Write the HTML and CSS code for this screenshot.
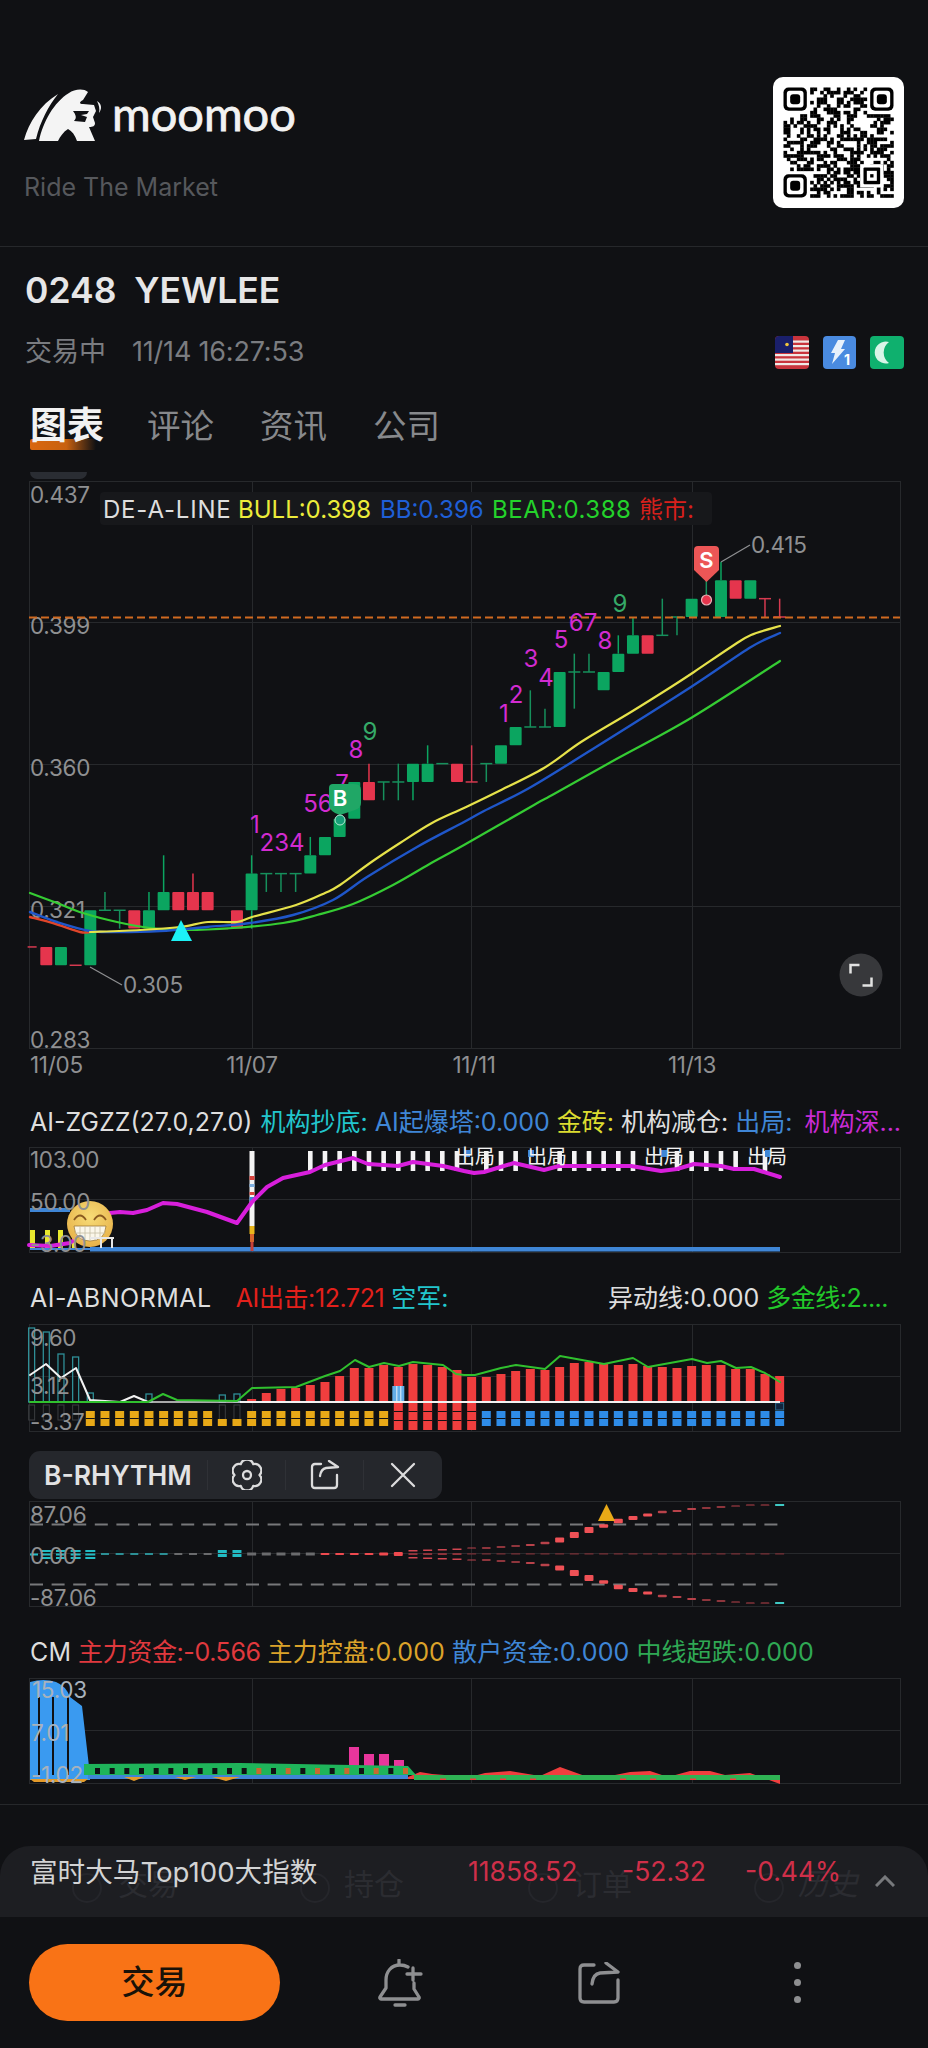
FILE: index.html
```html
<!DOCTYPE html>
<html lang="zh">
<head>
<meta charset="utf-8">
<title>0248 YEWLEE</title>
<link rel="stylesheet" href="styles.css">
</head>
<body>
<div class="page">
  <header class="brand">
    <div class="brand-left">
      <div class="logo">
        <svg class="bull" viewBox="0 0 78 53" width="78" height="53">
          <path class="bull-w" d="M0 51C5 33 16 16 34 5C25 16 16 33 12 50Z"/>
          <path class="bull-w" d="M15 52C19 33 30 13 45 4C50 0 60-1 64 3L59 11C55 13 55 15 59 15L70 16L72 22L69 28L71 34C71 37 69 38 65 38L71 52H53C51 46 48 42 44 40C39 43 36 48 34 52Z"/>
          <path class="bull-d" d="M49 22L65 22L63 25L57 26L63 28L61 33L50 32C53 29 52 26 49 22Z"/>
          <path class="bull-w" d="M73 12C78 15 78 20 75 24C76 20 75 16 73 12Z"/>
        </svg>
        <span class="wordmark">moomoo</span>
      </div>
      <div class="tagline">Ride The Market</div>
    </div>
    <div class="qr"><svg id="qr" viewBox="0 0 131 131" width="131" height="131"></svg></div>
  </header>

  <h1 class="stock-title">0248  YEWLEE</h1>

  <div class="status">
    <span class="status-state">交易中</span>
    <span class="status-time">11/14 16:27:53</span>
    <span class="status-icons">
      <svg viewBox="0 0 34 33" width="34" height="33">
        <rect class="f-red" width="34" height="33" rx="4"/>
        <rect class="f-white" y="4.500" width="34" height="2.200"/><rect class="f-white" y="9" width="34" height="2.200"/>
        <rect class="f-white" y="13.500" width="34" height="2.200"/><rect class="f-white" y="18" width="34" height="2.200"/>
        <rect class="f-white" y="22.500" width="34" height="2.200"/><rect class="f-white" y="27" width="34" height="2.200"/>
        <path class="f-navy" d="M4 0H18V17H0V4Q0 0 4 0Z"/>
        <path class="f-yellow" d="M9 3.500A5 5 0 1 0 9 13.500A4 4 0 1 1 9 3.500Z"/>
        <circle class="f-yellow" cx="12" cy="8.500" r="1.800"/>
      </svg>
      <svg viewBox="0 0 33 33" width="33" height="33">
        <rect class="b-blue" width="33" height="33" rx="4"/>
        <path class="i-white" d="M15 4H22L18 13H22L9 28L12 17H8Z"/>
        <text class="b-one" x="21" y="29">1</text>
      </svg>
      <svg viewBox="0 0 34 33" width="34" height="33">
        <rect class="b-green" width="34" height="33" rx="4"/>
        <path class="i-mint" d="M19 6A11 11 0 1 0 19 27A13 13 0 0 1 19 6Z"/>
      </svg>
    </span>
  </div>

  <nav class="tabs">
    <span class="tab tab-active">图表</span>
    <span class="tab">评论</span>
    <span class="tab">资讯</span>
    <span class="tab">公司</span>
  </nav>
  <div class="pill"></div>

  <svg class="chart main-chart" id="main" viewBox="29 481 872 600" width="872" height="600">
    <g id="main-grid"></g>
    <text class="axis" x="30" y="503">0.437</text>
    <text class="axis" x="30" y="634">0.399</text>
    <text class="axis" x="30" y="776">0.360</text>
    <text class="axis" x="30" y="918">0.321</text>
    <text class="axis" x="30" y="1048">0.283</text>
    <text class="axis" x="30" y="1073">11/05</text>
    <text class="axis axis-mid" x="252" y="1073">11/07</text>
    <text class="axis axis-mid" x="474" y="1073">11/11</text>
    <text class="axis axis-mid" x="692" y="1073">11/13</text>
    <g id="main-marks"></g>
    <rect class="legend-bg" x="100" y="492" width="612" height="33" rx="4"/>
    <text class="legend leg-name c-white" x="103" y="518">DE-A-LINE</text>
    <text class="legend c-yellow" x="238" y="518">BULL:0.398</text>
    <text class="legend c-navy" x="380" y="518">BB:0.396</text>
    <text class="legend leg-bear c-lime" x="492" y="518">BEAR:0.388</text>
    <text class="legend c-red" x="639" y="518">熊市:</text>
    <text class="td c-mag" x="255" y="833">1</text>
    <text class="td c-mag" x="282" y="851">234</text>
    <text class="td c-mag" x="318" y="812">56</text>
    <text class="td c-mag" x="342" y="792">7</text>
    <text class="td c-mag" x="356" y="758">8</text>
    <text class="td c-grn" x="370" y="740">9</text>
    <text class="td c-mag" x="504" y="722">1</text>
    <text class="td c-mag" x="516" y="703">2</text>
    <text class="td c-mag" x="531" y="667">3</text>
    <text class="td c-mag" x="546" y="686">4</text>
    <text class="td c-mag" x="561" y="648">5</text>
    <text class="td c-mag" x="583" y="631">67</text>
    <text class="td c-mag" x="605" y="649">8</text>
    <text class="td c-grn" x="620" y="612">9</text>
    <g id="main-signals"></g>
    <text class="sig-letter" x="340" y="806">B</text>
    <text class="sig-letter" x="706.500" y="568">S</text>
    <text class="axis" x="751" y="553">0.415</text>
    <text class="axis" x="123" y="993">0.305</text>
  </svg>

  <div class="ind-row row-one">
    <span class="c-white">AI-ZGZZ(27.0,27.0)</span>
    <span class="c-cyan gap-1">机构抄底:</span>
    <span class="c-blue">AI起爆塔:0.000</span>
    <span class="c-yellow2">金砖:</span>
    <span class="c-white">机构减仓:</span>
    <span class="c-blue">出局:</span>
    <span class="c-mag2 gap-s">机构深...</span>
  </div>
  <svg class="chart panel-one" id="p1" viewBox="29 1147 872 106" width="872" height="106">
    <g id="p1-marks"></g>
    <text class="axis" x="30" y="1168">103.00</text>
    <text class="axis" x="30" y="1210">50.00</text>
    <text class="axis" x="30" y="1252">-3.00</text>
    <text class="out" x="475" y="1164">出局</text>
    <text class="out" x="547" y="1164">出局</text>
    <text class="out" x="664" y="1164">出局</text>
    <text class="out" x="767" y="1164">出局</text>
  </svg>

  <div class="ind-row row-two">
    <span class="c-white wide">AI-ABNORMAL</span>
    <span class="c-red2 gap-l tight2">AI出击:12.721</span>
    <span class="c-cyan">空军:</span>
    <span class="c-white gap-auto">异动线:0.000</span>
    <span class="c-lime2 tight3">多金线:2....</span>
  </div>
  <svg class="chart panel-two" id="p2" viewBox="29 1324 872 108" width="872" height="108">
    <g id="p2-marks"></g>
    <text class="axis" x="30" y="1346">9.60</text>
    <text class="axis" x="30" y="1394">3.12</text>
    <text class="axis" x="30" y="1430">-3.37</text>
  </svg>

  <div class="toolbar">
    <span class="tool-name">B-RHYTHM</span>
    <span class="tool-btn">
      <svg viewBox="-15 -15 30 30" width="30" height="30">
        <path class="tool-i" d="M12.500 0A6.500 6.500 0 0 1 6.250 10.800A6.500 6.500 0 0 1 -6.250 10.800A6.500 6.500 0 0 1 -12.500 0A6.500 6.500 0 0 1 -6.250 -10.800A6.500 6.500 0 0 1 6.250 -10.800A6.500 6.500 0 0 1 12.500 0Z"/>
        <circle class="tool-i" r="4"/>
      </svg>
    </span>
    <span class="tool-btn">
      <svg viewBox="0 0 30 30" width="30" height="30">
        <path class="tool-i" d="M11 4H5Q2 4 2 7V25Q2 28 5 28H24Q27 28 27 25V15M19 1L28 7L16 8Q11 9 10 16"/>
      </svg>
    </span>
    <span class="tool-btn">
      <svg viewBox="0 0 30 30" width="30" height="30">
        <path class="tool-i" d="M4 4L26 26M26 4L4 26"/>
      </svg>
    </span>
  </div>
  <svg class="chart panel-three" id="p3" viewBox="29 1501 872 106" width="872" height="106">
    <g id="p3-marks"></g>
    <text class="axis" x="30" y="1523">87.06</text>
    <text class="axis" x="30" y="1564">0.00</text>
    <text class="axis" x="30" y="1606">-87.06</text>
  </svg>

  <div class="ind-row row-three">
    <span class="c-white">CM</span>
    <span class="c-red3 tight2">主力资金:-0.566</span>
    <span class="c-gold">主力控盘:0.000</span>
    <span class="c-blue">散户资金:0.000</span>
    <span class="c-green3">中线超跌:0.000</span>
  </div>
  <svg class="chart panel-four" id="p4" viewBox="29 1678 872 106" width="872" height="106">
    <g id="p4-marks"></g>
    <text class="axis axis-soft" x="32" y="1698">15.03</text>
    <text class="axis axis-soft" x="31" y="1741">7.01</text>
    <text class="axis axis-soft" x="31" y="1783">-1.02</text>
  </svg>
  <div class="rule"></div>

  <section class="sheet">
    <div class="ghost">
      <i class="ghost-ring ring-a"></i><span class="ghost-a">交易</span>
      <i class="ghost-ring ring-b"></i><span class="ghost-b">持仓</span>
      <i class="ghost-ring ring-c"></i><span class="ghost-c">订单</span>
      <i class="ghost-ring ring-d"></i><span class="ghost-d">历史</span>
    </div>
    <div class="sheet-name">富时大马Top100大指数</div>
    <div class="sheet-num num-a">11858.52</div>
    <div class="sheet-num num-b">-52.32</div>
    <div class="sheet-num num-c">-0.44%</div>
    <svg class="sheet-chev" viewBox="0 0 20 12" width="20" height="12"><path d="M1 11L10 2L19 11"/></svg>
  </section>

  <footer class="bar">
    <button class="trade">交易</button>
    <svg class="bar-i bell" viewBox="0 0 46 48" width="46" height="48">
      <path d="M31 8C28.500 6.600 26 6 23 6C14 6 9 13 9 21V29L3 38C2.500 39 3 40 4 40H41C42 40 42.500 39 42 38L37 30V24M22 1V6M18 46H28M36 9V21M30 15H44"/>
    </svg>
    <svg class="bar-i share" viewBox="0 0 42 42" width="42" height="42">
      <path d="M16 3H6Q2 3 2 7V36Q2 40 6 40H36Q40 40 40 36V18M28 1L40 10L22 11Q15 12 14 22"/>
    </svg>
    <span class="dots"><i></i><i></i><i></i></span>
  </footer>
</div>
<script src="app.js"></script>
</body>
</html>
```

FILE: styles.css
```css
* { box-sizing: border-box; }
html, body { margin: 0; padding: 0; background: #101114; }
body { font-family: Inter, "Noto Sans CJK SC", sans-serif; }
.page { width: 928px; height: 2048px; overflow: hidden; background: #101114; color: #e0e0e0; }

.brand { height: 247px; padding: 77px 24px 0; display: flex; justify-content: space-between; align-items: flex-start; border-bottom: 1px solid #26282b; }
.brand-left { padding-top: 12px; }
.logo { display: flex; align-items: center; height: 53px; }
.bull { display: block; }
.bull-w { fill: #f4f4f4; }
.bull-d { fill: #101114; }
.wordmark { margin-left: 10px; font: 400 47px/53px Lato, sans-serif; color: #f2f2f2; -webkit-text-stroke: 0.8px #f2f2f2; position: relative; top: -2px; }
.tagline { margin-top: 29px; font-size: 25px; line-height: 32px; color: #56585c; }
.qr { width: 131px; height: 131px; background: #fff; border-radius: 10px; }
.qr svg { display: block; }
.q-mod { fill: #000; }
.q-w { fill: #fff; }

.stock-title { margin: 13px 0 0 25px; height: 62px; font-size: 35.500px; line-height: 62px; font-weight: 600; color: #e6e6e7; white-space: pre; }

.status { margin: 10px 24px 0 25px; height: 40px; display: flex; align-items: center; color: #7a7c80; }
.status-state { font-size: 27px; line-height: 40px; }
.status-time { margin-left: 26px; font-size: 27px; line-height: 40px; letter-spacing: -0.2px; }
.status-icons { margin-left: auto; display: flex; gap: 14px; align-items: center; }
.status-icons svg { display: block; }
.f-red { fill: #c9343c; }
.f-white { fill: #f0e9e6; }
.f-navy { fill: #1a1f6b; }
.f-yellow { fill: #f2c63c; }
.b-blue { fill: #4a8be0; }
.b-green { fill: #0fb06e; }
.i-white { fill: #e8f1fb; }
.i-mint { fill: #d9f5e8; }
.b-one { font: 700 14px Inter, sans-serif; fill: #fff; }

.tabs { margin: 32px 0 0 30px; height: 44px; display: flex; align-items: center; gap: 47px; position: relative; }
.tab { font-size: 33.500px; line-height: 44px; color: #87898c; }
.tab-active { font-size: 37px; font-weight: 700; color: #f2f2f2; position: relative; z-index: 0; }
.tab-active::after { content: ""; position: absolute; left: 0; bottom: -2px; width: 66px; height: 11px; border-radius: 2px; background: linear-gradient(90deg, #d9670f 0%, #c8610f 55%, rgba(200,97,15,0) 100%); z-index: -1; }
.tab:nth-child(2) { margin-left: -4px; }
.tab:nth-child(3), .tab:nth-child(4) { margin-left: -1px; }
.pill { margin: 24px 0 0 30px; width: 57px; height: 7px; background: #2a2d33; border-radius: 0 0 9px 9px; }

.chart { display: block; margin-left: 29px; overflow: visible; }
.main-chart { margin-top: 2px; }
.panel-one { margin-top: 7px; }
.panel-two { margin-top: 8px; }
.panel-three { margin-top: 2px; }
.panel-four { margin-top: 8px; }

.axis { font: 400 22.500px Inter, sans-serif; fill: #8f9092; letter-spacing: -0.3px; }
.axis-mid { text-anchor: middle; }
.axis-soft { fill: #a8b2bd; }
.legend-bg { fill: #17181b; }
.legend { font: 400 24px Inter, "Noto Sans CJK SC", sans-serif; }
.leg-name { letter-spacing: 0.8px; }
.leg-bear { letter-spacing: 0.5px; }
.td { font: 400 24px Inter, sans-serif; text-anchor: middle; }
.sig-letter { font: 600 22px Inter, sans-serif; fill: #fff; text-anchor: middle; }
.out { font: 400 20px "Noto Sans CJK SC", sans-serif; fill: #f2f2f2; text-anchor: middle; }

.c-white { color: #dedede; fill: #dedede; }
.c-yellow { fill: #ecec3a; }
.c-navy { fill: #1f5fd6; }
.c-lime { fill: #24d22b; }
.c-red { fill: #d8201c; }
.c-mag { fill: #d22bd0; }
.c-grn { fill: #35aa68; }
.c-cyan { color: #22c6cd; }
.c-blue { color: #3f86d6; }
.c-yellow2 { color: #dcdc30; }
.c-mag2 { color: #c92bd4; }
.c-red2 { color: #e3201b; }
.c-lime2 { color: #22c82a; }
.c-red3 { color: #e0393e; }
.c-gold { color: #dca32a; }
.c-green3 { color: #2fa854; }

.ind-row { margin-left: 30px; width: 870px; height: 36px; display: flex; align-items: center; gap: 7px; font-size: 25px; line-height: 36px; white-space: nowrap; font-family: Inter, "Noto Sans CJK SC", sans-serif; }
.row-one { margin-top: 23px; }
.row-two { margin-top: 27px; width: 858px; }
.row-three { margin-top: 27px; letter-spacing: 0.12px; }
.gap-1 { margin-left: 1px; }
.gap-l { margin-left: 17px; }
.gap-s { margin-left: 5px; }
.gap-auto { margin-left: auto; }
.tight2 { letter-spacing: -0.4px; }
.tight3 { letter-spacing: -0.5px; }
.wide { letter-spacing: 0.5px; }

.toolbar { margin: 19px 0 0 29px; width: 413px; height: 48px; background: #25272c; border-radius: 11px; display: flex; align-items: center; }
.tool-name { margin-left: 15px; width: 163px; font-size: 26.500px; font-weight: 600; color: #e2e2e3; }
.tool-btn { width: 78px; display: flex; justify-content: center; border-left: 1px solid #2f3136; }
.tool-btn svg { display: block; }
.tool-i { fill: none; stroke: #dcdcdd; stroke-width: 2.300px; stroke-linejoin: round; stroke-linecap: round; }

.rule { margin-top: 20px; height: 1px; background: #26282b; }

.sheet { margin-top: 41px; height: 71px; background: #1d1e22; border-radius: 30px 30px 0 0; position: relative; }
.ghost { position: absolute; inset: 0; color: #2b2c31; font-size: 30px; }
.ghost span { position: absolute; top: 17px; line-height: 42px; }
.ghost-a { left: 118px; }
.ghost-b { left: 344px; }
.ghost-c { left: 572px; }
.ghost-d { left: 798px; font-style: italic; }
.ghost-ring { position: absolute; top: 27px; width: 30px; height: 30px; border: 2px solid #25262b; border-radius: 50%; }
.ring-a { left: 72px; }
.ring-b { left: 300px; }
.ring-c { left: 528px; }
.ring-d { left: 754px; }
.sheet-name { position: absolute; left: 30px; top: 6px; font-size: 27.600px; line-height: 40px; color: #d2d3d4; white-space: nowrap; }
.sheet-num { position: absolute; top: 5px; font-size: 26.500px; line-height: 40px; color: #cf2f49; }
.num-a { left: 468px; }
.num-b { left: 622px; }
.num-c { left: 745px; }
.sheet-chev { position: absolute; left: 875px; top: 29px; }
.sheet-chev path { fill: none; stroke: #77797c; stroke-width: 3px; }

.bar { height: 131px; position: relative; display: flex; align-items: center; }
.trade { margin-left: 29px; width: 251px; height: 77px; border: 0; border-radius: 39px; background: #f97316; color: #1a1208; font: 500 33px "Noto Sans CJK SC", sans-serif; padding: 0 0 5px; }
.bar-i { display: block; }
.bar-i path { fill: none; stroke: #8e8f91; stroke-width: 3.300px; stroke-linejoin: round; stroke-linecap: round; }
.bell { margin-left: 97px; }
.share { margin-left: 155px; }
.dots { margin-left: 174px; display: flex; flex-direction: column; gap: 10px; }
.dots i { display: block; width: 7px; height: 7px; border-radius: 50%; background: #8e8f91; }
```

FILE: app.js
```js
var NS = 'http://www.w3.org/2000/svg';
function el(parent, tag, attrs) {
  var n = document.createElementNS(NS, tag);
  for (var k in attrs) n.setAttribute(k, attrs[k]);
  parent.appendChild(n);
  return n;
}
function $(id) { return document.getElementById(id); }
function X(i) { return 46.3 + 14.667 * i; }
function rect(g, x, y, w, h, fill, extra) {
  var a = { x: x, y: y, width: w, height: h, fill: fill };
  if (extra) for (var k in extra) a[k] = extra[k];
  return el(g, 'rect', a);
}
function line(g, x1, y1, x2, y2, stroke, w, extra) {
  var a = { x1: x1, y1: y1, x2: x2, y2: y2, stroke: stroke, 'stroke-width': w };
  if (extra) for (var k in extra) a[k] = extra[k];
  return el(g, 'line', a);
}
function poly(g, pts, stroke, w) {
  return el(g, 'polyline', {
    points: pts.map(function (p) { return p.join(','); }).join(' '),
    fill: 'none', stroke: stroke, 'stroke-width': w,
    'stroke-linejoin': 'round', 'stroke-linecap': 'round'
  });
}
/* smooth curve through the points (Catmull-Rom) */
function curve(g, pts, stroke, w) {
  var d = 'M' + pts[0][0] + ' ' + pts[0][1];
  for (var i = 0; i < pts.length - 1; i++) {
    var p0 = pts[i - 1] || pts[i], p1 = pts[i], p2 = pts[i + 1], p3 = pts[i + 2] || p2;
    d += 'C' + (p1[0] + (p2[0] - p0[0]) / 6) + ' ' + (p1[1] + (p2[1] - p0[1]) / 6) + ' ' +
      (p2[0] - (p3[0] - p1[0]) / 6) + ' ' + (p2[1] - (p3[1] - p1[1]) / 6) + ' ' + p2[0] + ' ' + p2[1];
  }
  return el(g, 'path', { d: d, fill: 'none', stroke: stroke, 'stroke-width': w, 'stroke-linecap': 'round' });
}
var GRID = '#27292c';
function frame(g, top, bottom, mids) {
  el(g, 'rect', { x: 29.5, y: top + 0.5, width: 871, height: bottom - top, fill: 'none', stroke: GRID, 'stroke-width': 1 });
  [252.5, 471.5, 692.5].forEach(function (x) { line(g, x, top, x, bottom, GRID, 1); });
  mids.forEach(function (y) { line(g, 29, y + 0.5, 900, y + 0.5, GRID, 1); });
}

/* QR */
(function () {
  var g = $('qr'), n = 33, m = 110 / n, ox = 10.5, oy = 10.5, seed = 20241114;
  function rnd() { seed = (seed * 1664525 + 1013904223) % 4294967296; return seed / 4294967296; }
  function inFinder(c, r) {
    return (c < 8 && r < 8) || (c >= n - 8 && r < 8) || (c < 8 && r >= n - 8);
  }
  for (var r = 0; r < n; r++) {
    for (var c = 0; c < n; c++) {
      if (inFinder(c, r)) continue;
      var v = rnd();
      if (v > 0.5) el(g, 'rect', { x: ox + c * m, y: oy + r * m, width: m + 0.3, height: m + 0.3, 'class': 'q-mod' });
    }
  }
  [[0, 0], [n - 7, 0], [0, n - 7]].forEach(function (p) {
    var x = ox + p[0] * m, y = oy + p[1] * m, s = 7 * m;
    el(g, 'rect', { x: x, y: y, width: s, height: s, rx: 5, 'class': 'q-mod' });
    el(g, 'rect', { x: x + m, y: y + m, width: s - 2 * m, height: s - 2 * m, rx: 3, 'class': 'q-w' });
    el(g, 'rect', { x: x + 2 * m, y: y + 2 * m, width: 3 * m, height: 3 * m, rx: 3, 'class': 'q-mod' });
  });
  var ax = ox + (n - 9) * m, ay = oy + (n - 9) * m;
  el(g, 'rect', { x: ax - m, y: ay - m, width: 7 * m, height: 7 * m, 'class': 'q-w' });
  el(g, 'rect', { x: ax, y: ay, width: 5 * m, height: 5 * m, rx: 1, 'class': 'q-mod' });
  el(g, 'rect', { x: ax + m, y: ay + m, width: 3 * m, height: 3 * m, 'class': 'q-w' });
  el(g, 'rect', { x: ax + 2 * m, y: ay + 2 * m, width: m, height: m, 'class': 'q-mod' });
})();

/* Main chart */
(function () {
  var grid = $('main-grid'), g = $('main-marks'), s = $('main-signals');
  frame(grid, 481, 1048, [622, 764, 906]);
  function L(n) { return 617 + 18.33 * n; }
  var G = '#0ba560', R = '#e5354d', GL = '#16905c', RL = '#d63a50';
  /* i, colour, bodyTop, bodyBottom, wickTop, wickBottom */
  var C = [
    [-1,'r',18,18],[0,'r',18,19],[1,'g',18,19],[2,'r',19,19],[3,'g',16,19],
    [4,'g',16,16,15],[5,'g',16,16,null,17],[6,'r',16,17],[7,'g',16,17,15],
    [8,'g',15,16,13],[9,'r',15,16],[10,'r',15,16,14],[11,'r',15,16],[12,'r',17,17],
    [13,'r',16,17],[14,'g',14,16,13,17],[15,'g',14,14,null,15],[16,'g',14,14,null,15],
    [17,'g',14,14,null,15],[18,'g',13,14,12],[19,'g',12,13],[20,'g',11,12],
    [21,'g',9,11],[22,'r',9,10,8],[23,'g',9,9,null,10],[24,'g',9,9,8,10],
    [25,'g',8,9,null,10],[26,'g',8,9,7],[27,'g',8,8],[28,'r',8,9],
    [29,'r',9,9,7],[30,'g',8,8,null,9],[31,'g',7,8],[32,'g',6,7],[33,'g',6,6,4],
    [34,'g',6,6,5],[35,'g',3,6],[36,'g',3,3,2,5],[37,'g',3,3,2],[38,'g',3,4],
    [39,'g',2,3,1],[40,'g',1,2,0],[41,'r',1,2],[42,'g',1,1,-1],[43,'g',0,0,null,1],
    [44,'g',-1,0],[45,'g',-1,-1,-2,-1],[46,'g',-2,0,-3],[47,'r',-2,-1],[48,'g',-2,-1],
    [49,'r',-1,-1,null,0],[50,'r',0,0,-1]
  ];
  C.forEach(function (c) {
    var x = X(c[0]), col = c[1] === 'g' ? G : R, thin = c[1] === 'g' ? GL : RL;
    if (c[0] === 45) { line(g, x, L(-2), x, L(-1), thin, 1.5); return; }
    var t = c[2], b = c[3];
    if (c[4] !== undefined && c[4] !== null) line(g, x, L(c[4]), x, L(t), t === b ? thin : col, 1.5);
    if (c[5] !== undefined) line(g, x, L(b), x, L(c[5]), t === b ? thin : col, 1.5);
    if (t === b) {
      if (c[0] === -1) line(g, x - 4, L(t), x + 5, L(t), thin, 1.5);
      else line(g, x - 6, L(t), x + 6, L(t), thin, 1.5);
    } else {
      rect(g, x - 6, L(t), 12, L(b) - L(t), col, { rx: 1 });
    }
  });
  curve(g, [[30,917],[53,923],[80,932],[90,932]], '#e0452a', 2.4);
  curve(g, [[30,893],[57,903],[83,913],[117,922],[150,928],[187,930],[233,928],[283,923],[317,915],[353,904],[393,885],[433,862],[464,845],[534,805],[554,794],[611,762],[691,718],[780,661]], '#35cc33', 2.2);
  curve(g, [[30,912],[57,922],[90,931],[117,932],[160,931],[207,927],[250,923],[293,915],[333,900],[367,877],[417,847],[464,822],[484,811],[531,787],[604,742],[691,687],[751,647],[780,633]], '#1f56c9', 2.4);
  curve(g, [[90,932],[140,930],[180,927],[208,922],[237,922],[252,917],[296,905],[325,893],[340,885],[370,863],[400,843],[432,823],[464,808],[497,792],[544,768],[581,742],[631,712],[671,687],[694,672],[731,647],[751,635],[780,626]], '#e6e24a', 2.2);
  line(g, 29, 617.5, 900, 617.5, '#d06a20', 2, { 'stroke-dasharray': '8 4' });

  /* signals */
  el(s, 'path', { d: 'M181 920L192 941H171Z', fill: '#1cf2f6' });
  el(s, 'path', { d: 'M333 784H354Q361 784 361 790V803Q361 808 355 810L340 815L335 813Q329 810 329 804V788Q329 784 333 784Z', fill: '#20a766' });
  el(s, 'circle', { cx: 340, cy: 820, r: 5, fill: '#17a078', stroke: '#b7e9d4', 'stroke-width': 1 });
  el(s, 'path', { d: 'M698 546H715Q719 546 719 550V570L706.500 582L694 570V550Q694 546 698 546Z', fill: '#ec5656' });
  el(s, 'circle', { cx: 706.500, cy: 600, r: 5, fill: '#e5354d', stroke: '#e9b3b8', 'stroke-width': 1.200 });
  line(s, 721, 562, 750, 545, '#8f9092', 1.2);
  line(s, 90, 967, 122, 985, '#8f9092', 1.2);
  el(s, 'circle', { cx: 861, cy: 975, r: 21.500, fill: '#37383b' });
  el(s, 'path', { d: 'M850.500 973.500V965H859.500M871.500 977.500V985.500H862.500', fill: 'none', stroke: '#e2e2e2', 'stroke-width': 2.500 });
})();

/* Panel 1 */
(function () {
  var g = $('p1-marks');
  frame(g, 1147, 1252, [1199]);
  rect(g, 30, 1208, 40, 4, '#3f86d6');
  [[30,5],[45,5],[58,5],[72,4]].forEach(function (b) { rect(g, b[0], 1230, b[1], 20, '#e8e82e'); });
  rect(g, 90, 1247, 690, 4.500, '#3f86d6');
  rect(g, 30, 1248, 60, 2, '#3f86d6');
  /* centre tower */
  rect(g, 249.500, 1151, 5, 75, '#f4f4f4');
  rect(g, 249.500, 1176, 5, 4, '#d9443f');
  rect(g, 249.500, 1184, 5, 3, '#7fb0e0');
  rect(g, 249.500, 1192, 5, 3, '#d9443f');
  rect(g, 249.500, 1197, 5, 4, '#3f86d6');
  rect(g, 249.500, 1226, 5, 8, '#eab71c');
  rect(g, 250, 1234, 4, 8, '#d8652c');
  rect(g, 250.500, 1242, 3, 9, '#c8403a');
  /* white ticks */
  var skip = { 29:1, 33:1, 34:1, 41:1, 42:1, 48:1 };
  for (var i = 18; i <= 49; i++) {
    if (skip[i]) continue;
    rect(g, X(i) - 2.300, 1151, 4.600, 20, '#f4f4f4');
  }
  [[464,1],[528,1],[661,1],[765,1]].forEach(function (p) { rect(g, p[0], 1150, 6, 7, '#3f86d6'); });
  poly(g, [[29,1245],[50,1246],[70,1243],[110,1213],[120,1212],[133,1213],[147,1210],[163,1203],[177,1204],[207,1212],[237,1223],[252,1202],[267,1187],[283,1178],[310,1172],[325,1165],[353,1158],[368,1164],[398,1166],[413,1162],[443,1166],[464,1171],[474,1173],[484,1172],[514,1163],[544,1170],[559,1166],[631,1166],[661,1171],[677,1169],[694,1164],[721,1166],[734,1169],[754,1169],[780,1177]], '#d81fdc', 4);
  /* grin */
  var d = el(g, 'defs', {});
  var rg = el(d, 'radialGradient', { id: 'grin', cx: '50%', cy: '35%', r: '70%' });
  el(rg, 'stop', { offset: '0%', 'stop-color': '#f7dc77' });
  el(rg, 'stop', { offset: '100%', 'stop-color': '#e6ae45' });
  el(g, 'circle', { cx: 90, cy: 1224, r: 23, fill: 'url(#grin)' });
  el(g, 'path', { d: 'M74 1220Q80 1211 86 1220M94 1220Q100 1211 106 1220', fill: 'none', stroke: '#8a5a20', 'stroke-width': 1.800 });
  el(g, 'path', { d: 'M74 1226H106Q105 1241 90 1241Q75 1241 74 1226Z', fill: '#fbf7ea', stroke: '#a07a35', 'stroke-width': 0.800 });
  [80, 85, 90, 95, 100].forEach(function (x) { line(g, x, 1226, x, 1240, '#c7bfa6', 0.800); });
  line(g, 75, 1233, 105, 1233, '#c7bfa6', 0.800);
  rect(g, 90, 1237, 24, 2, '#e8e8e8');
  rect(g, 100, 1238, 2, 10, '#e8e8e8');
  rect(g, 111, 1238, 2, 10, '#e8e8e8');
})();

/* Panel 2 */
(function () {
  var g = $('p2-marks'), base = 1402;
  frame(g, 1324, 1431, [1376]);
  var R = '#f03e3e';
  var tops = [1399,1393,1389,1388,1385,1382,1376,1368,1368,1365,1367,1364,1365,1367,1370,1377,1377,1374,1371,1369,1370,1367,1363,1362,1364,1365,1364,1366,1367,1368,1366,1365,1365,1369,1369,1374,1376];
  tops.forEach(function (t, k) { rect(g, X(14 + k) - 4.500, t, 9, base - t, R); });
  for (var i = 24; i <= 29; i++) {
    rect(g, X(i) - 4.500, 1402, 9, 28, R);
    rect(g, X(i) - 4.500, 1411, 9, 1, '#101114');
    rect(g, X(i) - 4.500, 1420, 9, 1, '#101114');
  }
  [[-1,1328],[0,1332],[1,1354],[2,1357],[3,1393],[7,1394],[12,1395],[13,1394]].forEach(function (b) {
    el(g, 'rect', { x: X(b[0]) - 3, y: b[1], width: 6, height: base - b[1], fill: 'none', stroke: '#2f8f97', 'stroke-width': 1.300 });
  });
  [-1,0,1,2,12,13].forEach(function (i) {
    el(g, 'rect', { x: X(i) - 3, y: 1405, width: 6, height: 15, fill: 'none', stroke: '#3a3c40', 'stroke-width': 1 });
  });
  rect(g, X(24) - 6, 1386, 12, 16, '#63ade8');
  rect(g, X(24) - 2, 1386, 1, 16, '#e7f2fb');
  rect(g, X(24) + 2, 1386, 1, 16, '#e7f2fb');
  for (i = 3; i <= 23; i++) {
    var half = (i === 12 || i === 13);
    rect(g, X(i) - 4.500, half ? 1419 : 1411, 9, half ? 7 : 15, '#e8a917');
    if (!half) rect(g, X(i) - 4.500, 1418, 9, 1, '#101114');
  }
  for (i = 30; i <= 50; i++) {
    rect(g, X(i) - 4.500, 1411, 9, 15, '#2e8ce8');
    rect(g, X(i) - 4.500, 1418, 9, 1, '#101114');
  }
  el(g, 'rect', { x: X(50) - 4, y: 1403, width: 8, height: 7, fill: '#12243c', stroke: '#2e6f8f', 'stroke-width': 1 });
  poly(g, [[30,1375],[46,1364],[61,1378],[76,1368],[90,1400],[120,1402],[134,1396],[148,1402]], '#f2f2f2', 2);
  line(g, 240, 1402, 780, 1402, '#f2f2f2', 2);
  line(g, 148, 1402, 240, 1402, '#dcdcdc', 1.500);
  poly(g, [[30,1402],[148,1402],[163,1394],[177,1400],[237,1401],[252,1388],[296,1387],[325,1376],[340,1371],[355,1360],[369,1367],[384,1363],[399,1366],[413,1362],[443,1365],[456,1374],[464,1375],[475,1375],[501,1368],[516,1365],[545,1369],[560,1356],[604,1364],[633,1358],[648,1367],[692,1359],[707,1363],[721,1361],[736,1368],[751,1367],[765,1373],[780,1382]], '#30c02e', 2);
})();

/* Panel 3 */
(function () {
  var g = $('p3-marks');
  frame(g, 1501, 1606, [1553]);
  [1524.500, 1584.500].forEach(function (y) {
    line(g, 30, y, 780, y, '#77787a', 2, { 'stroke-dasharray': '13 8.600' });
  });
  var TEAL = '#22bcc4', GREY = '#6a6b6d', RED = '#ef4a4f';
  for (var i = 0; i <= 3; i++) {
    var xx = X(i) - 5;
    rect(g, xx, 1550, 10, 2, TEAL);
    rect(g, xx, 1553.500, 10, 2, TEAL);
    rect(g, xx, 1557, 10, 2, TEAL);
  }
  rect(g, 30, 1553.500, 8, 2, TEAL);
  for (i = 4; i <= 8; i++) rect(g, X(i) - 4, 1553, 8, 2, '#2c8f95');
  for (i = 9; i <= 11; i++) rect(g, X(i) - 4, 1553, 8, 2, GREY);
  [12, 13].forEach(function (k) {
    rect(g, X(k) - 4.500, 1550, 9, 3, TEAL);
    rect(g, X(k) - 4.500, 1554, 9, 3, TEAL);
  });
  for (i = 14; i <= 18; i++) rect(g, X(i) - 4.500, 1552.500, 9, 3, GREY);
  var sizes = { 19:2, 20:2, 21:2, 22:2, 23:3, 24:4, 25:5, 26:5, 27:5, 28:5 };
  for (i = 19; i <= 28; i++) {
    var h = sizes[i];
    if (h < 5) rect(g, X(i) - 4.500, 1554 - h / 2, 9, h, RED, { rx: 1 });
    else {
      rect(g, X(i) - 4.500, 1550 - (i - 25) * 0.5, 9, 1.500, '#d04650');
      rect(g, X(i) - 4.500, 1557 + (i - 25) * 0.5, 9, 1.500, '#d04650');
      rect(g, X(i) - 4.500, 1553.300, 9, 1.500, '#b03a42');
    }
  }
  for (i = 29; i <= 50; i++) rect(g, X(i) - 4.500, 1553.300, 9, 1.200, '#7d3036');
  var ups = [1548,1548,1547,1546,1545,1543,1540,1535,1530,1526,1521,1518,1515,1512,1511,1509,1508,1507,1506,1505,1505];
  var hs = [1,1.500,1.500,1.500,2,2.500,5,6,6,3.500,4.500,4,3,2.500,2,2,1.500,1.500,1,1,1];
  ups.forEach(function (y, k) {
    var x = X(29 + k) - 4.500, h = hs[k], low = 1603 - (y - 1505);
    var c = h >= 3 ? '#ef5156' : '#b8424a';
    rect(g, x, y - h / 2, 9, h, c, { rx: 1 });
    rect(g, x, low - h / 2, 9, h, c, { rx: 1 });
  });
  rect(g, X(50) - 4.500, 1504, 9, 2, '#3fc9c4');
  rect(g, X(50) - 4.500, 1602, 9, 2, '#3fc9c4');
  el(g, 'path', { d: 'M606.500 1504L615 1521H598Z', fill: '#e8a917' });
})();

/* Panel 4 */
(function () {
  var g = $('p4-marks');
  frame(g, 1678, 1783, [1730]);
  el(g, 'path', { d: 'M30 1780V1682Q44 1678 56 1682Q66 1686 70 1697L82 1706L90 1775V1780Z', fill: '#3a9af0' });
  [39, 53, 68].forEach(function (x) { line(g, x, 1697, x, 1775, '#101114', 2); });
  rect(g, 88, 1775, 320, 4, '#3f86d6');
  el(g, 'path', { d: 'M30 1779H88L84 1782H34ZM124 1777H144L134 1781ZM175 1777H196L185 1780ZM212 1777H240L226 1781Z', fill: '#e39a2a' });
  [[354,1747],[369,1754],[384,1754],[399,1760]].forEach(function (b) { rect(g, b[0] - 5, b[1], 10, 1766 - b[1], '#e8369c'); });
  el(g, 'path', { d: 'M408 1777L420 1772L432 1774L470 1777L485 1773L510 1771L540 1776L560 1767L585 1776L610 1776L630 1772L650 1771L668 1777L690 1771L710 1771L725 1775L750 1773L780 1784V1779H408Z', fill: '#f03e3e' });
  el(g, 'path', { d: 'M84 1764L240 1763L408 1766L416 1775V1775H84Z', fill: '#1fb45a' });
  rect(g, 414, 1775, 366, 5, '#2fb354');
  for (var k = 0; k <= 21; k++) {
    rect(g, 95 + 14.667 * k, 1768, 5, 6, k > 10 && k % 2 ? '#c86a30' : '#101114');
  }
  [[440,1],[470,1],[500,1],[530,1],[620,1],[650,1],[690,1],[730,1]].forEach(function (p) { rect(g, p[0], 1778.500, 6, 1.500, '#f03e3e'); });
})();
```
